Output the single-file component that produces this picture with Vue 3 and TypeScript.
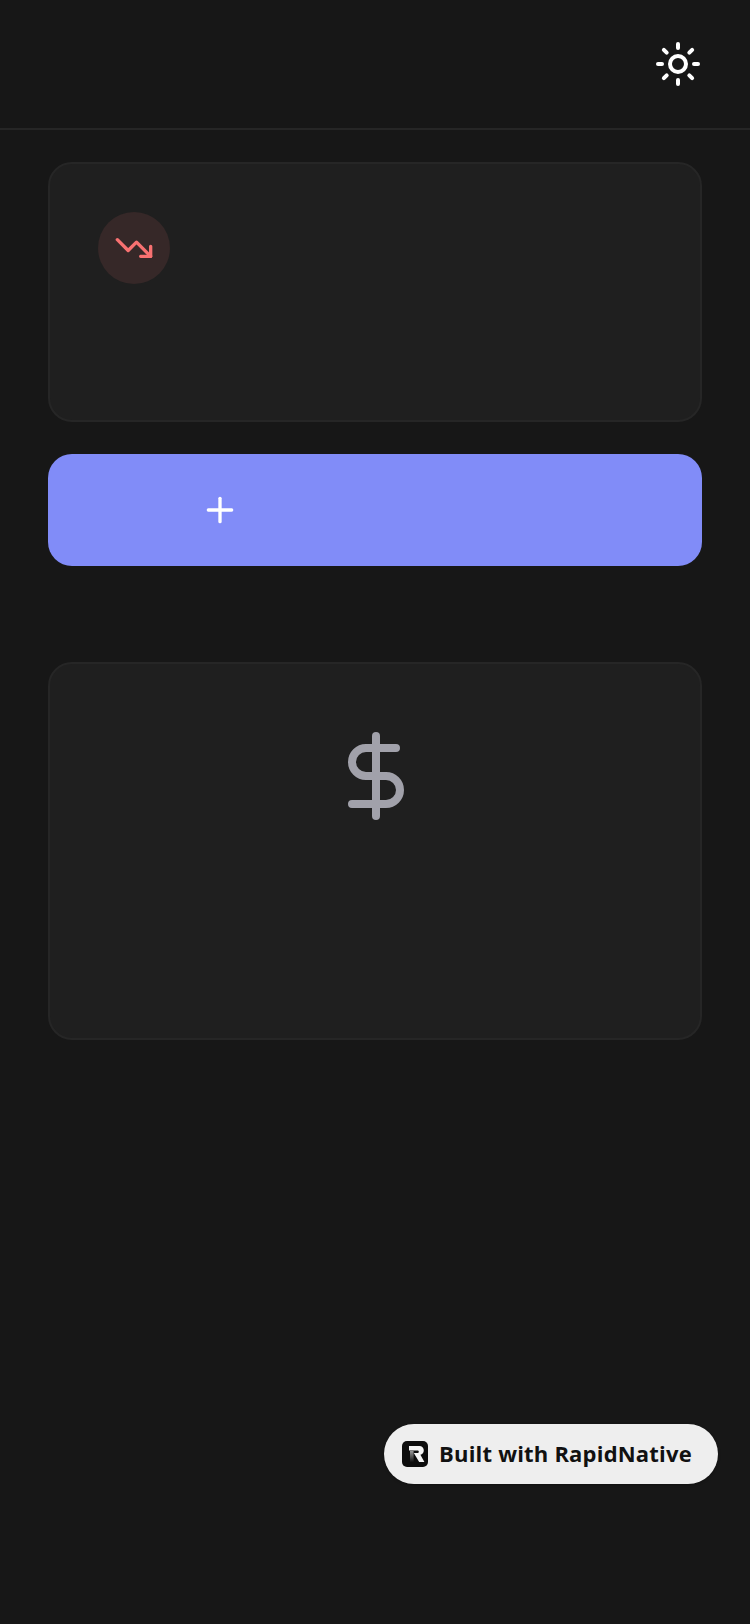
<script setup lang="ts">
const rays: string[] = [
  'M12 2v2',
  'M12 20v2',
  'm4.93 4.93 1.41 1.41',
  'm17.66 17.66 1.41 1.41',
  'M2 12h2',
  'M20 12h2',
  'm6.34 17.66-1.41 1.41',
  'm19.07 4.93-1.41 1.41',
]
</script>

<template>
  <div class="screen">
    <header class="header">
      <svg class="icon-48" viewBox="0 0 24 24" fill="none" stroke="#ffffff" stroke-width="2" stroke-linecap="round" stroke-linejoin="round">
        <circle cx="12" cy="12" r="4" />
        <path v-for="d in rays" :key="d" :d="d" />
      </svg>
    </header>

    <main class="content">
      <section class="card card-summary">
        <div class="trend-badge">
          <svg class="icon-40" viewBox="0 0 24 24" fill="none" stroke="#f87171" stroke-width="2" stroke-linecap="round" stroke-linejoin="round">
            <path d="M16 17h6v-6" />
            <path d="m22 17-8.5-8.5-5 5L2 7" />
          </svg>
        </div>
      </section>

      <button class="add-button" type="button">
        <svg class="icon-40" viewBox="0 0 24 24" fill="none" stroke="#ffffff" stroke-width="2" stroke-linecap="round" stroke-linejoin="round">
          <path d="M5 12h14" />
          <path d="M12 5v14" />
        </svg>
      </button>

      <section class="card card-empty">
        <svg class="icon-96" viewBox="0 0 24 24" fill="none" stroke="#a1a1aa" stroke-width="2" stroke-linecap="round" stroke-linejoin="round">
          <path d="M12 2v20" />
          <path d="M17 5H9.5a3.5 3.5 0 0 0 0 7h5a3.5 3.5 0 0 1 0 7H6" />
        </svg>
      </section>
    </main>

    <div class="built-badge">
      <svg class="logo" viewBox="0 0 26 26">
        <defs>
          <linearGradient id="stem-fade" x1="0" y1="0" x2="0" y2="1">
            <stop offset="0" stop-color="#999999" />
            <stop offset="1" stop-color="#111111" />
          </linearGradient>
        </defs>
        <rect width="26" height="26" rx="5" fill="#0d0d0d" />
        <path d="M8 10h3.6v11H8z" fill="url(#stem-fade)" />
        <path d="M7 5h10.5a4.3 4.3 0 0 1 4.3 4.3c0 2.4-1.4 4-3.4 4.5l4 7.2h-5.2l-5.4-9h3.6c.9 0 1.4-.5 1.4-1.3s-.5-1.3-1.4-1.3H7z" fill="#f5f5f5" />
      </svg>
      <span class="built-text">Built with RapidNative</span>
    </div>
  </div>
</template>

<style>
html,
body {
  margin: 0;
  background: #171717;
}
</style>

<style scoped>
.screen {
  position: relative;
  box-sizing: border-box;
  width: 750px;
  min-height: 1624px;
  background: #171717;
  font-family: "Open Sans", "Noto Sans", sans-serif;
}

.header {
  box-sizing: border-box;
  height: 130px;
  padding: 40px 48px 0;
  display: flex;
  justify-content: flex-end;
  align-items: flex-start;
  border-bottom: 2px solid #262626;
}

.icon-48 {
  width: 48px;
  height: 48px;
  display: block;
}

.icon-40 {
  width: 40px;
  height: 40px;
  display: block;
}

.icon-96 {
  width: 96px;
  height: 96px;
  display: block;
}

.content {
  padding: 32px 48px 0;
  display: flex;
  flex-direction: column;
}

.card {
  box-sizing: border-box;
  background: #1f1f1f;
  border: 2px solid #262626;
  border-radius: 24px;
}

.card-summary {
  height: 260px;
  padding: 48px;
}

.trend-badge {
  width: 72px;
  height: 72px;
  border-radius: 50%;
  background: #362828;
  display: flex;
  align-items: center;
  justify-content: center;
}

.add-button {
  box-sizing: border-box;
  margin: 32px 0 0;
  height: 112px;
  padding: 0 0 0 152px;
  border: 0;
  border-radius: 24px;
  background: #818cf8;
  display: flex;
  align-items: center;
}

.card-empty {
  margin-top: 96px;
  height: 378px;
  padding: 64px 0 0 2px;
  display: flex;
  justify-content: center;
  align-items: flex-start;
}

.built-badge {
  position: absolute;
  left: 384px;
  top: 1424px;
  box-sizing: border-box;
  width: 334px;
  height: 60px;
  padding: 0 18px;
  display: flex;
  align-items: center;
  gap: 11px;
  border-radius: 30px;
  background: #eeeeee;
  box-shadow: 0 1px 3px rgba(0, 0, 0, 0.3);
}

.logo {
  width: 26px;
  height: 26px;
  flex: none;
  display: block;
}

.built-text {
  font-size: 22px;
  line-height: 30px;
  font-weight: 700;
  letter-spacing: 0.2px;
  color: #111111;
  white-space: nowrap;
  position: relative;
  top: -1px;
}
</style>
